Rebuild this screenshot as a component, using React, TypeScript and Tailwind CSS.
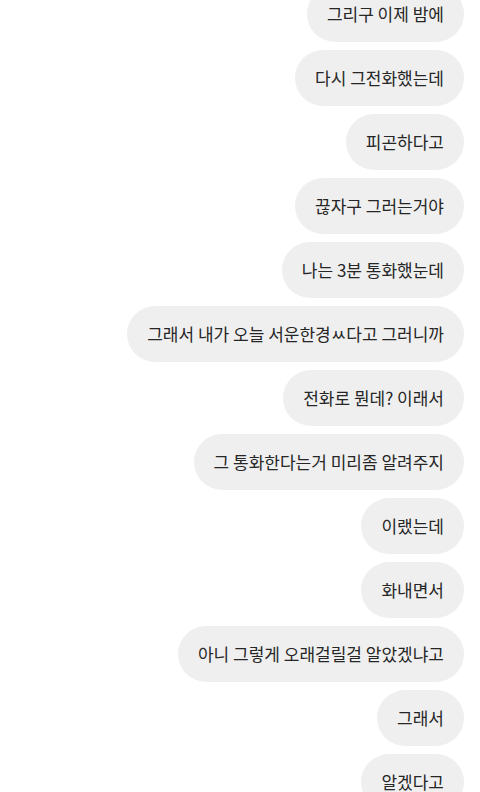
const messages = [
  '그리구 이제 밤에',
  '다시 그전화했는데',
  '피곤하다고',
  '끊자구 그러는거야',
  '나는 3분 통화했눈데',
  '그래서 내가 오늘 서운한경ㅆ다고 그러니까',
  '전화로 뭔데? 이래서',
  '그 통화한다는거 미리좀 알려주지',
  '이랬는데',
  '화내면서',
  '아니 그렇게 오래걸릴걸 알았겠냐고',
  '그래서',
  '알겠다고',
]

export default function App() {
  return (
    <div className="h-[792px] w-[480px] overflow-hidden bg-white">
      <div className="-mt-[14px] flex flex-col items-end gap-2 pr-4">
        {messages.map((m, i) => (
          <div
            key={i}
            className="flex h-14 items-center rounded-full bg-[#efefef] px-5 text-[17px] text-[#262626] whitespace-nowrap"
            style={{ fontFamily: '"Noto Sans CJK KR", "Noto Sans", sans-serif' }}
          >
            {m}
          </div>
        ))}
      </div>
    </div>
  )
}
